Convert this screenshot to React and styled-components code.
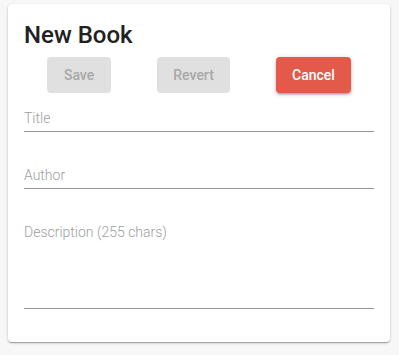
import React from "react";
import styled, { createGlobalStyle } from "styled-components";

const Global = createGlobalStyle`
  html, body { margin: 0; padding: 0; background: #f7f7f7; }
  body { font-family: Roboto, "Liberation Sans", sans-serif; }
  * { box-sizing: border-box; }
`;

const Page = styled.div`
  padding: 4px 9px 13px 8px;
`;

const Card = styled.div`
  width: 382px;
  height: 338px;
  background: #fff;
  border-radius: 4px;
  box-shadow: 0 1px 3px rgba(0,0,0,0.2), 0 1px 1px rgba(0,0,0,0.14), 0 2px 1px -1px rgba(0,0,0,0.12);
  padding: 17px 16px 0 16px;
  display: flex;
  flex-direction: column;
`;

const Heading = styled.h1`
  margin: 0;
  font-size: 24px;
  font-weight: 500;
  line-height: 28px;
  color: #212121;
`;

const Actions = styled.div`
  display: flex;
  justify-content: space-around;
  margin-top: 8px;
`;

const Button = styled.button`
  height: 36px;
  min-width: 64px;
  padding: 0 16px;
  border: none;
  border-radius: 4px;
  font-family: Roboto, "Liberation Sans", sans-serif;
  font-size: 14px;
  font-weight: 500;
  background: ${p => (p.$danger ? "#e35a4a" : "#e0e0e0")};
  color: ${p => (p.$danger ? "#ffffff" : "#a8a8a8")};
  box-shadow: ${p =>
    p.$danger
      ? "0 1px 5px rgba(0,0,0,0.2), 0 2px 2px rgba(0,0,0,0.14), 0 3px 1px -2px rgba(0,0,0,0.12)"
      : "none"};
`;

const Field = styled.div`
  margin-top: ${p => p.$gap}px;
  height: ${p => p.$height}px;
  border-bottom: 1px solid #949494;
`;

const Label = styled.div`
  font-size: 14px;
  font-weight: 300;
  line-height: 20px;
  color: #9e9e9e;
`;

export default function App() {
  return (
    <>
      <Global />
      <Page>
        <Card>
          <Heading>New Book</Heading>
          <Actions>
            <Button disabled>Save</Button>
            <Button disabled>Revert</Button>
            <Button $danger>Cancel</Button>
          </Actions>
          <Field $gap={15} $height={24}>
            <Label>Title</Label>
          </Field>
          <Field $gap={33} $height={24}>
            <Label>Author</Label>
          </Field>
          <Field $gap={33} $height={87}>
            <Label>Description (255 chars)</Label>
          </Field>
        </Card>
      </Page>
    </>
  );
}
